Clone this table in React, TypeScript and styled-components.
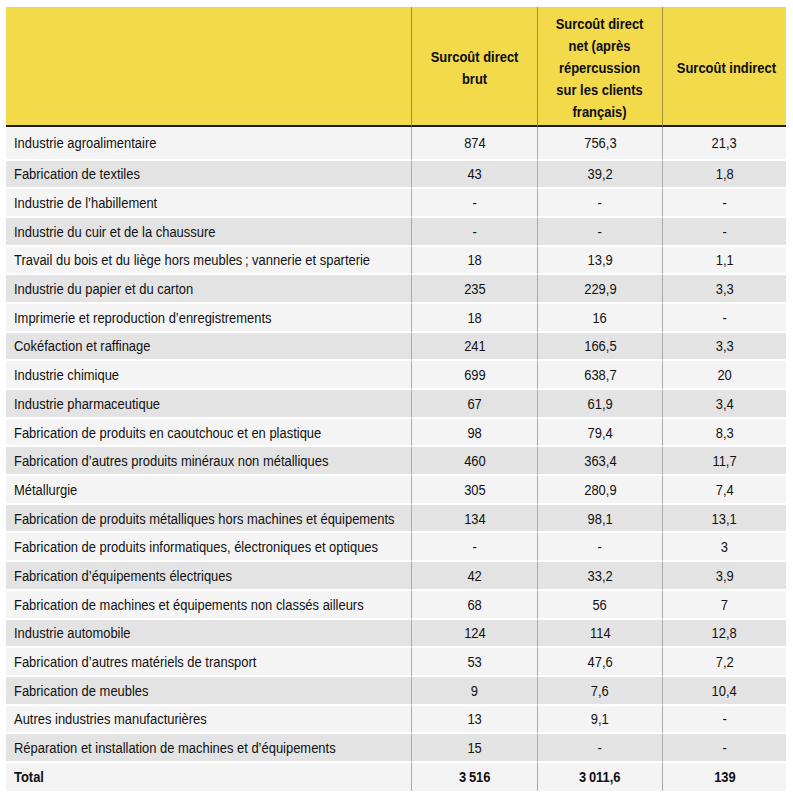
import React from "react";
import styled, { createGlobalStyle } from "styled-components";

const GlobalStyle = createGlobalStyle`
  html, body { margin: 0; padding: 0; background: #ffffff; }
  body {
    font-family: "Liberation Sans", Arial, sans-serif;
    color: #111111;
  }
`;

const Page = styled.div`
  padding: 7px 7px 0 6px;
`;

const Table = styled.table`
  width: 780px;
  border-collapse: separate;
  border-spacing: 0;
  table-layout: fixed;
  font-size: 15.5px;
`;

/* Narrow face: the reference uses a condensed grotesque */
const Narrow = styled.span<{ $origin: "left" | "center" }>`
  display: inline-block;
  white-space: nowrap;
  transform: scaleX(0.835);
  transform-origin: ${(p) => p.$origin} center;
`;

const HeadCell = styled.th<{ $first?: boolean }>`
  background: #f2da4b;
  height: 115px;
  padding: 3px 4px 0;
  border-bottom: 2px solid #1c1c1c;
  border-left: ${(p) => (p.$first ? "none" : "1px solid #a08f3a")};
  font-weight: 700;
  line-height: 22px;
  text-align: center;
  vertical-align: middle;
  color: #0d0d0d;
`;

const Row = styled.tr<{ $shade: boolean; $h: number }>`
  background: ${(p) => (p.$shade ? "#e3e3e3" : "#f4f4f5")};
  height: ${(p) => p.$h}px;
`;

const LabelCell = styled.td<{ $bold?: boolean; $gap: boolean }>`
  padding: 1px 8px 0;
  text-align: left;
  white-space: nowrap;
  font-weight: ${(p) => (p.$bold ? 700 : 400)};
  border-bottom: ${(p) => (p.$gap ? "2px solid #ffffff" : "none")};
`;

const ValueCell = styled.td<{ $bold?: boolean; $gap: boolean }>`
  padding: 1px 4px 0;
  text-align: center;
  white-space: nowrap;
  font-weight: ${(p) => (p.$bold ? 700 : 400)};
  border-left: 1px solid #a9a9a9;
  border-bottom: ${(p) => (p.$gap ? "2px solid #ffffff" : "none")};
`;

type Line = [string, string, string, string];

const rows: Line[] = [
  ["Industrie agroalimentaire", "874", "756,3", "21,3"],
  ["Fabrication de textiles", "43", "39,2", "1,8"],
  ["Industrie de l’habillement", "-", "-", "-"],
  ["Industrie du cuir et de la chaussure", "-", "-", "-"],
  ["Travail du bois et du liège hors meubles\u202f; vannerie et sparterie", "18", "13,9", "1,1"],
  ["Industrie du papier et du carton", "235", "229,9", "3,3"],
  ["Imprimerie et reproduction d’enregistrements", "18", "16", "-"],
  ["Cokéfaction et raffinage", "241", "166,5", "3,3"],
  ["Industrie chimique", "699", "638,7", "20"],
  ["Industrie pharmaceutique", "67", "61,9", "3,4"],
  ["Fabrication de produits en caoutchouc et en plastique", "98", "79,4", "8,3"],
  ["Fabrication d’autres produits minéraux non métalliques", "460", "363,4", "11,7"],
  ["Métallurgie", "305", "280,9", "7,4"],
  ["Fabrication de produits métalliques hors machines et équipements", "134", "98,1", "13,1"],
  ["Fabrication de produits informatiques, électroniques et optiques", "-", "-", "3"],
  ["Fabrication d’équipements électriques", "42", "33,2", "3,9"],
  ["Fabrication de machines et équipements non classés ailleurs", "68", "56", "7"],
  ["Industrie automobile", "124", "114", "12,8"],
  ["Fabrication d’autres matériels de transport", "53", "47,6", "7,2"],
  ["Fabrication de meubles", "9", "7,6", "10,4"],
  ["Autres industries manufacturières", "13", "9,1", "-"],
  ["Réparation et installation de machines et d’équipements", "15", "-", "-"],
];

const total: Line = ["Total", "3\u202f516", "3\u202f011,6", "139"];

function BodyRow({ line, shade, h, bold, gap }: { line: Line; shade: boolean; h: number; bold?: boolean; gap: boolean }) {
  return (
    <Row $shade={shade} $h={h}>
      <LabelCell $bold={bold} $gap={gap}>
        <Narrow $origin="left">{line[0]}</Narrow>
      </LabelCell>
      {line.slice(1).map((v, k) => (
        <ValueCell key={k} $bold={bold} $gap={gap}>
          <Narrow $origin="center">{v}</Narrow>
        </ValueCell>
      ))}
    </Row>
  );
}

export default function App() {
  return (
    <Page>
      <GlobalStyle />
      <Table>
        <colgroup>
          <col style={{ width: 405 }} />
          <col style={{ width: 126 }} />
          <col style={{ width: 125 }} />
          <col style={{ width: 124 }} />
        </colgroup>
        <thead>
          <tr>
            <HeadCell $first />
            <HeadCell>
              <Narrow $origin="center">
                Surcoût direct
                <br />
                brut
              </Narrow>
            </HeadCell>
            <HeadCell>
              <Narrow $origin="center">
                Surcoût direct
                <br />
                net (après
                <br />
                répercussion
                <br />
                sur les clients
                <br />
                français)
              </Narrow>
            </HeadCell>
            <HeadCell>
              <Narrow $origin="center">Surcoût indirect</Narrow>
            </HeadCell>
          </tr>
        </thead>
        <tbody>
          {rows.map((r, i) => (
            <BodyRow key={r[0]} line={r} shade={i % 2 === 1} h={i === 0 ? 33.5 : 28.7} gap />
          ))}
          <BodyRow line={total} shade={false} h={28} bold gap={false} />
        </tbody>
      </Table>
    </Page>
  );
}
